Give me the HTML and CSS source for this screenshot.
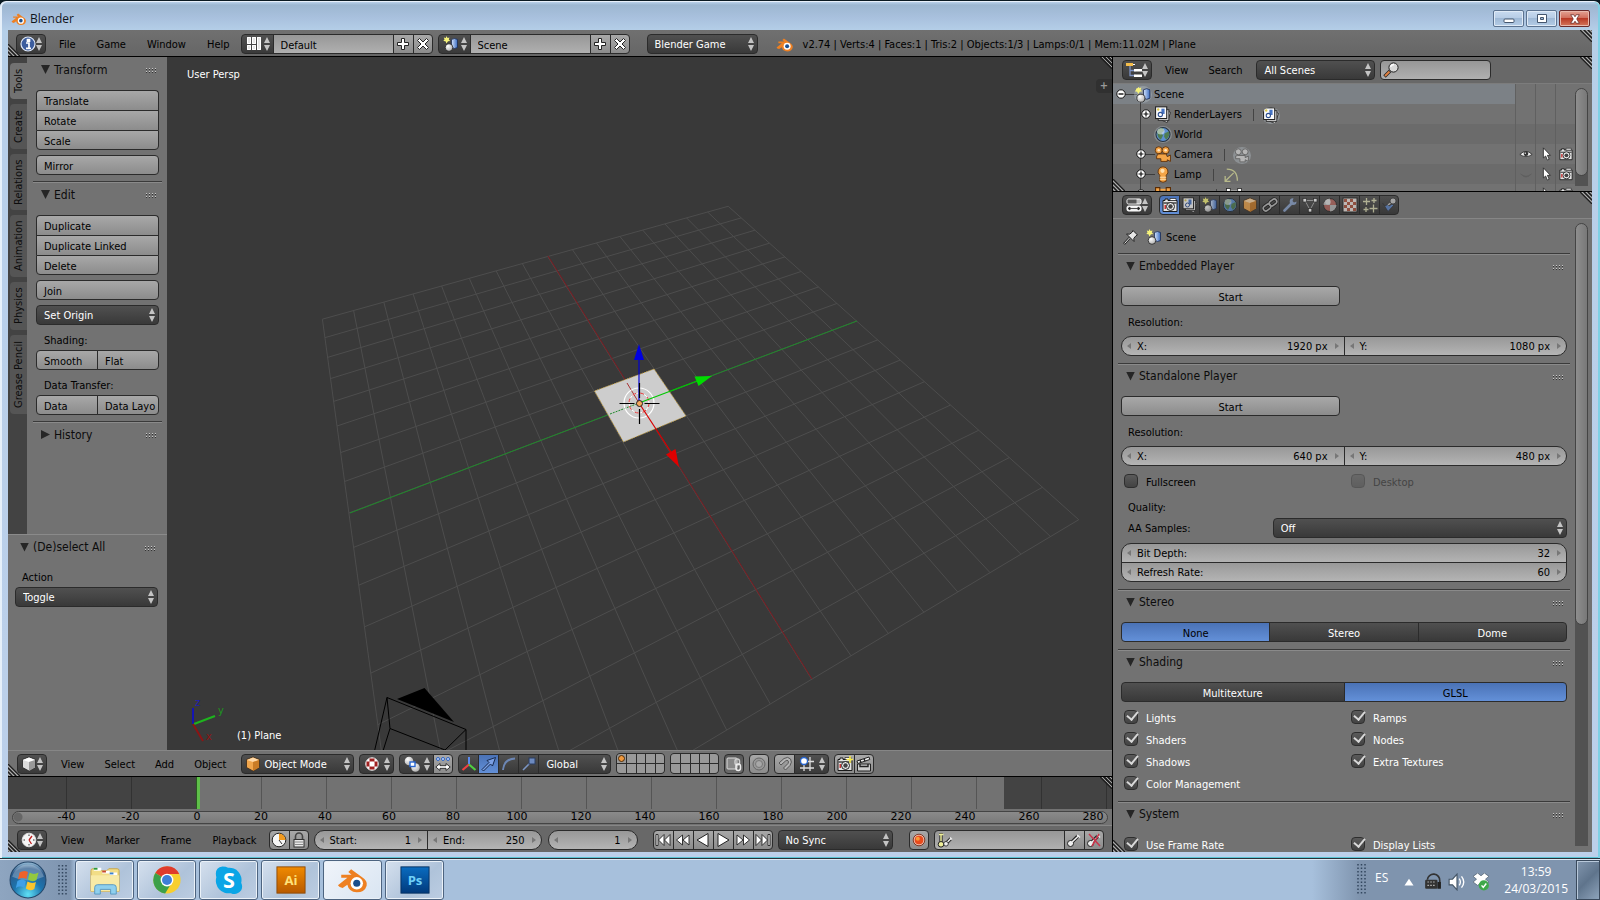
FILE: index.html
```html
<!DOCTYPE html>
<html lang="en">
<head>
<meta charset="utf-8">
<title>Blender</title>
<link rel="stylesheet" href="styles.css">
</head>
<body>
<svg class="defs" aria-hidden="true">
  <defs>
    <linearGradient id="gOrange" x1="0" y1="0" x2="1" y2="1"><stop offset="0" stop-color="#ffd9a0"/><stop offset="1" stop-color="#d9822b"/></linearGradient>
    <linearGradient id="gBlue" x1="0" y1="0" x2="1" y2="0"><stop offset="0" stop-color="#d6e6ff"/><stop offset="1" stop-color="#3b6cc0"/></linearGradient>
    <radialGradient id="gBall" cx=".35" cy=".3" r=".8"><stop offset="0" stop-color="#fff"/><stop offset="1" stop-color="#a8a8a8"/></radialGradient>
    <radialGradient id="gOrb" cx=".5" cy=".9" r=".9"><stop offset="0" stop-color="#5fe0f5"/><stop offset=".45" stop-color="#1d74ad"/><stop offset=".8" stop-color="#2b5a8c"/><stop offset="1" stop-color="#9fc4dc"/></radialGradient>
    <linearGradient id="gAi" x1="0" y1="0" x2="0" y2="1"><stop offset="0" stop-color="#f08a00"/><stop offset="1" stop-color="#b85a00"/></linearGradient>
    <linearGradient id="gPs" x1="0" y1="0" x2="0" y2="1"><stop offset="0" stop-color="#0a6cc0"/><stop offset="1" stop-color="#013a7c"/></linearGradient>
  </defs>
  <symbol id="updown" viewBox="0 0 6 14"><path d="M3 0L6 6H0zM3 14L0 8H6z" fill="#c4c4c4"/></symbol>
  <symbol id="blender" viewBox="0 0 34 28"><path d="M1 19.500L11 11.500H4.500V8.500H15.500L12 5.500L15 2.500L26 10.500Q33 15 31.500 20Q29.500 27 21 27Q12.500 26.500 11 19L6 22.500Q3 22.500 1 19.500Z" fill="#ee8022"/><circle cx="21" cy="17.500" r="6.600" fill="#fff"/><circle cx="21" cy="17.500" r="3.800" fill="#1c4f8c"/></symbol>
  <symbol id="info" viewBox="0 0 16 16"><circle cx="8" cy="8" r="7" fill="#3c5d9e" stroke="#dfe8f8" stroke-width="1.200"/><path d="M6 7h3v5M6 12.300h5M7.500 3.500h2v1.700h-2z" fill="none" stroke="#fff" stroke-width="1.700"/></symbol>
  <symbol id="layout" viewBox="0 0 16 16"><path d="M1 1h4v7H1zM6 1h4v7H6zM1 9h4v5H1zM6 9h4v5H6zM11 1h4v13h-4z" fill="#e6e6e6"/><path d="M1.500 1.500h3v6h-3zM6.500 1.500h3v6h-3zM1.500 9.500h3v4h-3zM6.500 9.500h3v4h-3zM11.500 1.500h3v12h-3z" fill="none" stroke="#fff"/></symbol>
  <symbol id="plus" viewBox="0 0 14 14"><path d="M5.500 1.500h3v4h4v3h-4v4h-3v-4h-4v-3h4z" fill="#fff" stroke="#222"/></symbol>
  <symbol id="cross" viewBox="0 0 14 14"><path d="M3.500 1.500L7 5L10.500 1.500L12.500 3.500L9 7L12.500 10.500L10.500 12.500L7 9L3.500 12.500L1.500 10.500L5 7L1.500 3.500z" fill="#fff" stroke="#222"/></symbol>
  <symbol id="scene" viewBox="0 0 16 16"><path d="M8.500 3.500q3-2 6 0v8q-3 2-6 0z" fill="url(#gBlue)" stroke="#1c2d55" stroke-width=".8"/><circle cx="6" cy="11.500" r="3.800" fill="url(#gBall)" stroke="#222" stroke-width=".8"/><path d="M3.500 0l1 2 2-.5-.7 2 1.400 1.500-2.200.3L3.500 7.500 2.500 5.300.3 5 1.500 3.500.8 1.500l2 .5z" fill="#f6f37a"/></symbol>
  <symbol id="outliner" viewBox="0 0 16 16"><path d="M4 4v9.500h6M4 8.500h6" fill="none" stroke="#7d92c4" stroke-width="1.300"/><rect x="0" y="1" width="7" height="3" fill="#f4bd4b"/><path d="M7 2.500h2" stroke="#fff"/><rect x="8" y="7" width="8" height="2.500" fill="#fff"/><rect x="8" y="12.500" width="8" height="2.500" fill="#fff"/></symbol>
  <symbol id="props" viewBox="0 0 16 16"><rect x="1" y="2" width="14" height="5" rx="1.500" fill="#bbb" stroke="#fff"/><rect x="1.500" y="2.500" width="9" height="4" fill="#555"/><rect x="1" y="9" width="14" height="5" rx="1.500" fill="#eee" stroke="#fff"/><path d="M2 11.500l2-1.500v3zM14 11.500l-2-1.500v3zM4 11.500h8" stroke="#222" fill="#222" stroke-width=".8"/></symbol>
  <symbol id="search" viewBox="0 0 16 16"><path d="M7 9L1.500 14.500" stroke="#222" stroke-width="3.400"/><path d="M6.500 9.500L2 14" stroke="#e08040" stroke-width="2"/><circle cx="10.500" cy="5.500" r="4.600" fill="#d9d9d9" stroke="#222"/><path d="M7.500 5q1-2.500 3.500-2.500" stroke="#fff" fill="none" stroke-width="1.300"/></symbol>
  <symbol id="layers" viewBox="0 0 16 16"><path d="M7 13.500l5 2 3-9.500-2.500-1z" fill="#eee" stroke="#222" stroke-width=".8"/><rect x="3.500" y="3.500" width="10" height="10" fill="#ddd" stroke="#222" stroke-width=".8"/><rect x="1" y=".8" width="10.500" height="11" fill="#fafafa" stroke="#222"/><path d="M6.500 2.500h3v5h-3z" fill="#4674c4"/><circle cx="5.500" cy="8" r="2" fill="#fff" stroke="#2c4f92"/><circle cx="3.500" cy="3.300" r="1.100" fill="#ddc94a"/></symbol>
  <symbol id="world" viewBox="0 0 16 16"><circle cx="8" cy="8" r="6.600" fill="#5c8fd0" stroke="#26323f"/><path d="M3 4q2-2.500 5-2l1 2.500-2.500 2L8 9l-2 4Q1.500 10 3 4zM9.500 7l4-2q1.500 4-2.500 8l-2-3z" fill="#4f7d52"/><ellipse cx="6" cy="5" rx="3.500" ry="3" fill="#fff" opacity=".5"/></symbol>
  <symbol id="movcam" viewBox="0 0 16 16"><g fill="#f3a447" stroke="#5a2c05" stroke-width=".8"><circle cx="4" cy="4" r="3.300"/><circle cx="10.500" cy="4" r="3.300"/><path d="M3.500 7.500h7.500l1 2.500 3-1.500v6l-3-1.500v1.500H6V12H2V9.500z"/></g><circle cx="4" cy="4" r="1.200" fill="#ffe6c4"/><circle cx="10.500" cy="4" r="1.200" fill="#ffe6c4"/></symbol>
  <symbol id="movcam2" viewBox="0 0 16 16"><g fill="#b5b5b5" stroke="#666" stroke-width=".9"><circle cx="4.500" cy="4.500" r="2.800"/><circle cx="11" cy="4.500" r="2.800"/><path d="M4 8h7v2l3-1.500v5L11 12v2H6V11H2V8.500z"/></g></symbol>
  <symbol id="bulb" viewBox="0 0 16 16"><path d="M8 .8a4.500 4.500 0 0 1 3 8v5.500q-3 2-6 0V8.800a4.500 4.500 0 0 1 3-8z" fill="#f3a447" stroke="#5a2c05" stroke-width=".8"/><path d="M5 10.500h6M5 12.500h6" stroke="#ffe0b0"/><circle cx="7.500" cy="4.500" r="2" fill="#ffe0b0"/></symbol>
  <symbol id="arc" viewBox="0 0 16 16"><path d="M4 2q10 0 10 11M10.500 5.500L3 13M2.500 8.500v5h5" fill="none" stroke="#b7b98a" stroke-width="1.200"/></symbol>
  <symbol id="eye" viewBox="0 0 16 16"><path d="M1 8.500Q8 1.500 15 8.500Q8 13.500 1 8.500z" fill="#eee" stroke="#222" stroke-width=".9"/><circle cx="8" cy="7.800" r="2.600" fill="#333"/><circle cx="7.200" cy="7" r=".8" fill="#fff"/></symbol>
  <symbol id="eyeoff" viewBox="0 0 16 16"><path d="M2 8q6 5 12 0q-6 7-12 0z" fill="#555" stroke="#606060"/></symbol>
  <symbol id="cursor" viewBox="0 0 16 16"><path d="M5 1v11.500l2.600-2.200 2 4.700 2-1-2-4.500h3.400z" fill="#fff" stroke="#222" stroke-width=".9"/></symbol>
  <symbol id="camera" viewBox="0 0 16 16"><path d="M1 3.500h2V2h3v1.500h9v11H1z" fill="#e4e4e4" stroke="#1a1a1a"/><path d="M8 1.500h6v2H8z" fill="#fff" stroke="#222" stroke-width=".7"/><path d="M1.500 6h13" stroke="#444" stroke-width="1.300"/><circle cx="8.500" cy="9.500" r="4" fill="#eee" stroke="#222"/><circle cx="8.500" cy="9.500" r="2.200" fill="#444"/><path d="M2.500 8h1.500v4H2.500z" fill="#c33"/></symbol>
  <symbol id="cube" viewBox="0 0 16 16"><path d="M8 1l6.500 2.500v8L8 15l-6.500-3.500v-8z" fill="#f0a54c" stroke="#3a2a1a" stroke-width=".8"/><path d="M2 4l6 2 6-2L8 1.500z" fill="#ffd9a8"/><path d="M8 6v9l6-3.500V4z" fill="#c97b26"/></symbol>
  <symbol id="cubew" viewBox="0 0 16 16"><path d="M8 1l6.500 2.500v8L8 15l-6.500-3.500v-8z" fill="#ddd" stroke="#222" stroke-width=".8"/><path d="M2 4l6 2 6-2L8 1.500z" fill="#fff"/><path d="M8 6v9l6-3.500V4z" fill="#999"/></symbol>
  <symbol id="link" viewBox="0 0 16 16"><g fill="none" stroke="#1c1c1c" stroke-width="3.400"><rect x="1" y="8" width="8" height="5" rx="2.500" transform="rotate(-38 5 10.500)"/><rect x="7" y="3" width="8" height="5" rx="2.500" transform="rotate(-38 11 5.500)"/></g><g fill="none" stroke="#bbb" stroke-width="1.600"><rect x="1" y="8" width="8" height="5" rx="2.500" transform="rotate(-38 5 10.500)"/><rect x="7" y="3" width="8" height="5" rx="2.500" transform="rotate(-38 11 5.500)"/></g></symbol>
  <symbol id="wrench" viewBox="0 0 16 16"><path d="M2.500 13.500L9.500 6.500" stroke="#8ea6cf" stroke-width="2.600" stroke-linecap="round"/><path d="M14.500 4.500a3.400 3.400 0 1 1-3-3.200L10.500 4l1.500 1.500z" fill="#8ea6cf"/></symbol>
  <symbol id="mesh" viewBox="0 0 16 16"><path d="M3 3.500h10L8 13z" fill="none" stroke="#aaa"/><g fill="#fff" stroke="#222" stroke-width=".7"><rect x="1" y="1.500" width="3.500" height="3.500"/><rect x="11.500" y="1.500" width="3.500" height="3.500"/><rect x="6.300" y="11.500" width="3.500" height="3.500"/></g></symbol>
  <symbol id="material" viewBox="0 0 16 16"><circle cx="8" cy="8" r="6.500" fill="#b96a62" stroke="#2a2a2a"/><path d="M8 1.500a6.500 6.500 0 0 0-6.500 6.500H8zM8 8h6.500A6.500 6.500 0 0 1 8 14.500z" fill="#bbb"/><circle cx="6" cy="5" r="2.800" fill="#fff" opacity=".6"/></symbol>
  <symbol id="texture" viewBox="0 0 16 16"><rect x="1" y="1" width="14" height="14" fill="#f0e8e4" stroke="#222"/><path d="M2 2h3v3H2zM8 2h3v3H8zM5 5h3v3H5zM11 5h3v3h-3zM2 8h3v3H2zM8 8h3v3H8zM5 11h3v3H5zM11 11h3v3h-3z" fill="#b0553f"/></symbol>
  <symbol id="particles" viewBox="0 0 16 16"><path d="M4.500 1v7M1 4.500h7M12 1v5M9.500 3.500h5M4 10v5M1.500 12.500h5M11.500 7.500v8M7.500 11.500h8" stroke="#dcdcb4" stroke-width="1.300"/></symbol>
  <symbol id="physics" viewBox="0 0 16 16"><path d="M1.500 6L4 9l2.500-1.500L8 9l3-2 2 1-6 6.500z" fill="#5f86c8" stroke="#333" stroke-width=".8"/><path d="M7 8l4-3" stroke="#ccc" stroke-width="1.500"/><circle cx="12" cy="4" r="3" fill="#ccc" stroke="#333" stroke-width=".8"/></symbol>
  <symbol id="pin" viewBox="0 0 16 16"><path d="M1 15l5.500-6" stroke="#222" stroke-width="2.400"/><path d="M1.500 14.500l5-5.500" stroke="#eee"/><path d="M10 1.500L14.500 6l-1.500.7-2.200 2.600.2 3.200-7.500-7.500 3.200.2L9.300 3z" fill="#e6e6e6" stroke="#222"/></symbol>
  <symbol id="shade" viewBox="0 0 16 16"><circle cx="8" cy="8" r="6.300" fill="#fff" stroke="#ddd"/><path d="M5.500 2.500h5v3h-5zM5.500 10.500h5v3h-5zM2.500 5.500h3v5h-3zM10.500 5.500h3v5h-3z" fill="#a02020"/><circle cx="8" cy="8" r="2.300" fill="#fff"/></symbol>
  <symbol id="pivot" viewBox="0 0 16 16"><circle cx="5" cy="5" r="4.300" fill="url(#gBall)"/><circle cx="11.500" cy="11.500" r="4.300" fill="url(#gBall)"/><rect x="6" y="6" width="5" height="4.500" fill="#fff" stroke="#2765d0" stroke-width="1.400"/></symbol>
  <symbol id="manip" viewBox="0 0 16 16"><g fill="#cfe0ff" stroke="#2b62c4"><circle cx="3" cy="3" r="1.500"/><circle cx="8" cy="3" r="1.500"/><circle cx="13" cy="3" r="1.500"/></g><path d="M.8 11L5 7.500v2.200h6V7.500l4.200 3.500L11 14.500v-2.200H5v2.200z" fill="#fff" stroke="#222" stroke-width=".9"/></symbol>
  <symbol id="axes" viewBox="0 0 16 16"><path d="M8 8.500V1" stroke="#5b8bf0" stroke-width="2"/><path d="M8 8.500L1.500 14" stroke="#f04040" stroke-width="2.200"/><path d="M8 8.500l6.500 5.500" stroke="#50d040" stroke-width="2.200"/></symbol>
  <symbol id="arrow" viewBox="0 0 16 16"><path d="M1 13.500L8 6.500 6 4.500l8.500-3-3 8.500-2-2L2.500 15z" fill="#7ba0e4" stroke="#16294e"/></symbol>
  <symbol id="rot" viewBox="0 0 16 16"><path d="M2 14Q3 3 14 2.500" fill="none" stroke="#6c86b4" stroke-width="2"/></symbol>
  <symbol id="scale" viewBox="0 0 16 16"><path d="M2 14l7-7" stroke="#7c96c4" stroke-width="1.600"/><rect x="8" y="2" width="6" height="6" fill="#6d8abf" stroke="#2b3d60"/></symbol>
  <symbol id="lock3d" viewBox="0 0 16 16"><rect x="1" y="2" width="10" height="11" rx="1" fill="#888" stroke="#ddd"/><rect x="9" y="3" width="4.500" height="6" rx="2.200" fill="none" stroke="#ccc" stroke-width="1.500"/><rect x="10" y="8" width="4.500" height="6.500" rx="2.200" fill="none" stroke="#eee" stroke-width="1.500"/></symbol>
  <symbol id="prop" viewBox="0 0 16 16"><circle cx="8" cy="8" r="6" fill="#999" stroke="#666"/><circle cx="8" cy="8" r="3.500" fill="#a8a8a8" stroke="#777"/></symbol>
  <symbol id="magnet" viewBox="0 0 16 16"><path d="M2 7L7 2.500Q11 0 13.500 3Q15.500 6 13 9.500L8.500 14l-2-2L11 7.500Q12 5.500 11 4.700Q10 4 8.500 5L4 9z" fill="#b5b5b5" stroke="#555"/></symbol>
  <symbol id="snap" viewBox="0 0 16 16"><path d="M5 3v12M11 1v14M1 12h14M8 5.500h7" stroke="#ddd" stroke-width="1.300"/><circle cx="5" cy="5" r="3.500" fill="#fff" stroke="#2765d0" stroke-width="1.300"/></symbol>
  <symbol id="clap" viewBox="0 0 16 16"><path d="M1.500 8h13v7h-13z" fill="#ccc" stroke="#222"/><path d="M1 5l12-4 .8 2.500-12 4z" fill="#eee" stroke="#222"/><path d="M4 4l1 2.500M8 2.700l1 2.500M4 8v2.500h8V8" stroke="#222" fill="none" stroke-width="1.400"/></symbol>
  <symbol id="clock" viewBox="0 0 16 16"><circle cx="8" cy="8" r="6.800" fill="#f5f5f5" stroke="#ddd"/><path d="M8 8l3-4M8 8l2.500 4" stroke="#c02020" stroke-width="1.300"/><path d="M8 2.500v1.500M8 12v1.500M2.500 8H4M12 8h1.500" stroke="#333"/></symbol>
  <symbol id="timer" viewBox="0 0 16 16"><circle cx="8" cy="8" r="6.800" fill="#f5f5f5" stroke="#222"/><path d="M8 8V1.500A6.500 6.500 0 0 1 14.500 8z" fill="#f09a20"/><path d="M8 8l3 4" stroke="#333"/></symbol>
  <symbol id="padlock" viewBox="0 0 16 16"><path d="M4.500 8V4.500a3.500 3.500 0 0 1 7 0V8" fill="none" stroke="#444" stroke-width="1.600"/><rect x="3" y="7.500" width="10" height="7.500" fill="#e8e8e8" stroke="#333"/><path d="M3.500 10h9M3.500 12.500h9" stroke="#888"/></symbol>
  <symbol id="start" viewBox="0 0 16 16"><path d="M1 2.500h2v11H1zM9 2.500v11L3.500 8zM15 2.500v11L9.500 8z" fill="#fff" stroke="#222" stroke-width=".9"/></symbol>
  <symbol id="rew" viewBox="0 0 16 16"><path d="M7.500 3v10L1.500 8zM14 3v10L8 8z" fill="#fff" stroke="#222" stroke-width=".9"/></symbol>
  <symbol id="play" viewBox="0 0 16 16"><path d="M3 1.500v13L14 8z" fill="#fff" stroke="#222"/></symbol>
  <symbol id="rec" viewBox="0 0 16 16"><circle cx="8" cy="8" r="5" fill="#e84a1c" stroke="#fbd0c0"/><circle cx="8" cy="8" r="5.800" fill="none" stroke="#7a2008" stroke-width=".8"/><circle cx="6.800" cy="6.800" r="2" fill="#f79a3a"/></symbol>
  <symbol id="key" viewBox="0 0 16 16"><path d="M6 10L12 4" stroke="#222" stroke-width="3.600"/><circle cx="4.500" cy="11.500" r="3" fill="#eee" stroke="#222"/><path d="M5.500 10.500L13 3.500M11 3l3 2.500" stroke="#eee" stroke-width="1.600"/></symbol>
  <symbol id="keyset" viewBox="0 0 16 16"><path d="M4 1v10" stroke="#222" stroke-width="3.200"/><path d="M4 1.500V11M4 2.500h2.500M2 2.500h2" stroke="#eeee9a" stroke-width="1.500"/><circle cx="4" cy="12.300" r="2.800" fill="#eeee9a" stroke="#222"/><path d="M9 11.500l5-5" stroke="#222" stroke-width="3.200"/><path d="M9 11.500l5.500-5.500M13 5.500l2 2" stroke="#eee" stroke-width="1.500"/><circle cx="9" cy="11.800" r="2.300" fill="#eee" stroke="#222" stroke-width=".8"/></symbol>
  <symbol id="exp" viewBox="0 0 10 10"><circle cx="5" cy="5" r="4.200" fill="#fff" stroke="#111"/><path d="M2.500 5h5M5 2.500v5" stroke="#111" stroke-width="1.200"/></symbol>
  <symbol id="col" viewBox="0 0 10 10"><circle cx="5" cy="5" r="4.200" fill="#fff" stroke="#111"/><path d="M2.500 5h5" stroke="#111" stroke-width="1.400"/></symbol>
  <symbol id="grip" viewBox="0 0 11 5"><path d="M0 .5h11M0 3.500h11" stroke="#c8c8c8" stroke-width="1" stroke-dasharray="1 2"/><path d="M0 1.500h11M0 4.500h11" stroke="#333" stroke-width="1" stroke-dasharray="1 2"/></symbol>
  <symbol id="hatch" viewBox="0 0 12 12"><path d="M0 0l12 12M4 0l8 8M8 0l4 4" stroke="#1c1c1c" stroke-width="1.200"/><path d="M2 0l10 10M6 0l6 6M10 0l2 2" stroke="#bbb" stroke-width=".8"/></symbol>
  <symbol id="hatchbl" viewBox="0 0 12 12"><path d="M0 0l12 12M0 4l8 8M0 8l4 4" stroke="#1c1c1c" stroke-width="1.200"/><path d="M0 2l10 10M0 6l6 6M0 10l2 2" stroke="#bbb" stroke-width=".8"/></symbol>
</svg>

<div class="window">
  <header class="titlebar">
    <svg class="logo"><use href="#blender"/></svg>
    <h1>Blender</h1>
    <div class="winbtns">
      <button aria-label="Minimize"><svg viewBox="0 0 12 12"><rect x="1" y="6" width="10" height="3.500" rx="1" fill="#fff" stroke="#44566e"/></svg></button>
      <button aria-label="Maximize"><svg viewBox="0 0 12 12"><path d="M1.500 1.500h9v8h-9zM4.500 4.500h3v2h-3z" fill="#fff" fill-rule="evenodd" stroke="#44566e"/></svg></button>
      <button class="close" aria-label="Close"><svg viewBox="0 0 14 14"><path d="M2 2h3.500L7 4.500 8.500 2H12L9 7l3 5H8.500L7 9.500 5.500 12H2l3-5z" fill="#fff" stroke="#5a2020" stroke-width=".8"/></svg></button>
    </div>
  </header>

  <div class="app">
    <div class="bar topbar">
      <svg class="hatch bl"><use href="#hatchbl"/></svg><svg class="hatch tr"><use href="#hatch"/></svg>
      <button class="w dark etype" aria-label="Editor type"><svg class="i"><use href="#info"/></svg><svg class="ud"><use href="#updown"/></svg></button>
      <nav class="menus"><button>File</button><button>Game</button><button>Window</button><button>Help</button></nav>
      <div class="group idsel">
        <button class="w dark pick" aria-label="Screen"><svg class="i"><use href="#layout"/></svg><svg class="ud"><use href="#updown"/></svg></button>
        <input class="w text" value="Default" aria-label="Screen name">
        <button class="w light sq" aria-label="Add screen"><svg class="s"><use href="#plus"/></svg></button>
        <button class="w light sq" aria-label="Delete screen"><svg class="s"><use href="#cross"/></svg></button>
      </div>
      <div class="group idsel">
        <button class="w dark pick" aria-label="Scene"><svg class="i"><use href="#scene"/></svg><svg class="ud"><use href="#updown"/></svg></button>
        <input class="w text" value="Scene" aria-label="Scene name">
        <button class="w light sq" aria-label="Add scene"><svg class="s"><use href="#plus"/></svg></button>
        <button class="w light sq" aria-label="Delete scene"><svg class="s"><use href="#cross"/></svg></button>
      </div>
      <div class="menu engine"><select class="w dark" aria-label="Engine"><option>Blender Game</option></select><svg class="ud"><use href="#updown"/></svg></div>
      <svg class="logo2"><use href="#blender"/></svg>
      <span class="stats">v2.74 | Verts:4 | Faces:1 | Tris:2 | Objects:1/3 | Lamps:0/1 | Mem:11.02M | Plane</span>
    </div>

    <div class="body">
      <div class="left">
        <section class="view3d">
          <div class="main3d">
            <aside class="shelf">
              <div class="tools">
                <div class="tabs">
                  <button class="tab t1 on">Tools</button><button class="tab t2">Create</button><button class="tab t3">Relations</button><button class="tab t4">Animation</button><button class="tab t5">Physics</button><button class="tab t6">Grease Pencil</button>
                </div>
                <div class="toolpanels">
                  <section class="panel first">
                    <h2><i class="tri"></i>Transform<svg class="grip"><use href="#grip"/></svg></h2>
                    <div class="col"><button class="w light">Translate</button><button class="w light">Rotate</button><button class="w light">Scale</button></div>
                    <div class="col"><button class="w light">Mirror</button></div>
                  </section>
                  <section class="panel">
                    <h2><i class="tri"></i>Edit<svg class="grip"><use href="#grip"/></svg></h2>
                    <div class="col"><button class="w light">Duplicate</button><button class="w light">Duplicate Linked</button><button class="w light">Delete</button></div>
                    <div class="col"><button class="w light">Join</button></div>
                    <div class="menu"><select class="w dark" aria-label="Set Origin"><option>Set Origin</option></select><svg class="ud"><use href="#updown"/></svg></div>
                    <p class="lab">Shading:</p>
                    <div class="row"><button class="w light">Smooth</button><button class="w light">Flat</button></div>
                    <p class="lab">Data Transfer:</p>
                    <div class="row"><button class="w light">Data</button><button class="w light">Data Layo</button></div>
                  </section>
                  <section class="panel"><h2><i class="tri shut"></i>History<svg class="grip"><use href="#grip"/></svg></h2></section>
                </div>
              </div>
              <section class="panel redo">
                <h2><i class="tri"></i>(De)select All<svg class="grip"><use href="#grip"/></svg></h2>
                <label for="action">Action</label>
                <div class="menu"><select id="action" class="w dark"><option>Toggle</option></select><svg class="ud"><use href="#updown"/></svg></div>
              </section>
            </aside>
            <div class="canvas">
              <svg class="scene3d" viewBox="167 57 945 693" preserveAspectRatio="xMidYMid slice">
                <g id="grid"></g>
                <path d="M350 513L639 403L857 321" stroke="#1f8a2a" fill="none"/>
                <path d="M548 256L812 679" stroke="#7e1a20" fill="none"/>
                <path d="M654 369L686 416L623.500 442L594.500 391Z" fill="#cdcdcd" stroke="#c9a23c" stroke-dasharray="1 1"/>
                <path d="M627 383L639 403" stroke="#a33"/><path d="M610 414L639 403" stroke="#1f8a2a" stroke-dasharray="2 1"/>
                <circle cx="639" cy="403" r="15" fill="none" stroke="#fff" stroke-width="1.200"/>
                <circle cx="639" cy="403" r="10" fill="none" stroke="#fff"/><circle cx="639" cy="403" r="10" fill="none" stroke="#e03030" stroke-dasharray="4 4"/>
                <path d="M639 403V360" stroke="#0000d0" stroke-width="1.200"/><path d="M639 344L644 360H634z" fill="#0000e0"/>
                <path d="M639 403L697 381" stroke="#00c800" stroke-width="1.200"/><path d="M712 376L694.500 376.500L698.500 386z" fill="#00dc00"/>
                <path d="M639 403L671 452" stroke="#d80000" stroke-width="1.200"/><path d="M679 467L666 454.500L675.500 449z" fill="#e00000"/>
                <path d="M619.500 403.500h15M644.500 403.500h15M639.500 383v15M639.500 409v15" stroke="#000" stroke-width="1.200"/>
                <circle cx="639.500" cy="403.500" r="3" fill="#f5a85c" stroke="#222"/>
                <path d="M397 699L424.500 688L454 722z" fill="#000"/>
                <path d="M374.500 751L387 697.500L466 729.500V751M387 697.500L390 728.500L445 750L466 729.500M390 728.500L383 751" fill="none" stroke="#000"/>
                <g fill="none" stroke-width="2"><path d="M193 724V708" stroke="#1414b4"/><path d="M194 724L215 716" stroke="#1eb41e"/><path d="M193 724L203 741" stroke="#8c1414"/></g>
                <text class="ax" x="195" y="706" fill="#1e1eb4">z</text><text class="ax" x="218" y="714" fill="#1e961e">y</text><text class="ax" x="206" y="740" fill="#8c1414">x</text>
              </svg>
              <span class="persp">User Persp</span><span class="obname">(1) Plane</span>
              <svg class="hatch tr"><use href="#hatch"/></svg>
              <button class="expand" aria-label="Show properties">+</button>
            </div>
          </div>
          <div class="bar vbar">
            <svg class="hatch bl"><use href="#hatchbl"/></svg>
            <button class="w dark etype" aria-label="Editor type"><svg class="i"><use href="#cubew"/></svg><svg class="ud"><use href="#updown"/></svg></button>
            <nav class="menus"><button>View</button><button>Select</button><button>Add</button><button>Object</button></nav>
            <div class="menu mode"><svg class="i"><use href="#cube"/></svg><select class="w dark" aria-label="Mode"><option>Object Mode</option></select><svg class="ud"><use href="#updown"/></svg></div>
            <button class="w dark pick" aria-label="Viewport shading"><svg class="i"><use href="#shade"/></svg><svg class="ud"><use href="#updown"/></svg></button>
            <div class="group"><button class="w dark pick" aria-label="Pivot"><svg class="i"><use href="#pivot"/></svg><svg class="ud"><use href="#updown"/></svg></button><button class="w light sq" aria-label="Manipulate centers"><svg class="i"><use href="#manip"/></svg></button></div>
            <div class="group"><button class="w dark sq" aria-label="Manipulator"><svg class="i"><use href="#axes"/></svg></button><button class="w blue sq" aria-label="Translate"><svg class="i"><use href="#arrow"/></svg></button><button class="w dark sq" aria-label="Rotate"><svg class="i"><use href="#rot"/></svg></button><button class="w dark sq" aria-label="Scale"><svg class="i"><use href="#scale"/></svg></button><div class="menu orient"><select class="w dark" aria-label="Orientation"><option>Global</option></select><svg class="ud"><use href="#updown"/></svg></div></div>
            <div class="layergrid"><b class="act"></b><b></b><b></b><b></b><b></b><b></b><b></b><b></b><b></b><b></b></div>
            <div class="layergrid"><b></b><b></b><b></b><b></b><b></b><b></b><b></b><b></b><b></b><b></b></div>
            <button class="w dim sq" aria-label="Lock camera"><svg class="i"><use href="#lock3d"/></svg></button>
            <button class="w light sq" aria-label="Proportional editing"><svg class="i"><use href="#prop"/></svg></button>
            <div class="group"><button class="w light sq" aria-label="Snap"><svg class="i"><use href="#magnet"/></svg></button><button class="w dark pick" aria-label="Snap element"><svg class="i"><use href="#snap"/></svg><svg class="ud"><use href="#updown"/></svg></button></div>
            <div class="group"><button class="w light sq" aria-label="Render image"><svg class="i" viewBox="0 0 16 16"><use href="#camera"/><path d="M13 0v7M9.500 3.500h7" stroke="#f6e84a" stroke-width="1.600"/></svg></button><button class="w light sq" aria-label="Render animation"><svg class="i"><use href="#clap"/></svg></button></div>
          </div>
        </section>

        <section class="timeline">
          <svg class="hatch tr"><use href="#hatch"/></svg>
          <div class="track"><div class="lines"><i></i><i></i><i></i><i></i><i></i><i></i><i></i><i></i><i></i><i></i><i></i><i></i><i></i><i></i><i></i><i></i><i></i></div><div class="playhead"></div></div>
          <div class="scale"><div class="scalebar"></div><div class="nums"><span class="neg">-40</span><span class="neg">-20</span><span>0</span><span>20</span><span>40</span><span>60</span><span>80</span><span>100</span><span>120</span><span>140</span><span>160</span><span>180</span><span>200</span><span>220</span><span>240</span><span>260</span><span>280</span></div></div>
          <div class="bar tbar">
            <svg class="hatch bl"><use href="#hatchbl"/></svg>
            <button class="w dark etype" aria-label="Editor type"><svg class="i"><use href="#clock"/></svg><svg class="ud"><use href="#updown"/></svg></button>
            <nav class="menus"><button>View</button><button>Marker</button><button>Frame</button><button>Playback</button></nav>
            <div class="group rg"><button class="w light sq" aria-label="Preview range"><svg class="i"><use href="#timer"/></svg></button><button class="w light sq" aria-label="Lock time"><svg class="i"><use href="#padlock"/></svg></button></div>
            <div class="nums2 range"><div class="num"><i class="l"></i><label for="st">Start:</label><input id="st" value="1"><i class="r"></i></div><div class="num"><i class="l"></i><label for="en">End:</label><input id="en" value="250"><i class="r"></i></div></div>
            <div class="nums2 cur"><div class="num"><i class="l"></i><input value="1" aria-label="Current frame"><i class="r"></i></div></div>
            <div class="group player"><button class="w light sq" aria-label="First"><svg class="i"><use href="#start"/></svg></button><button class="w light sq" aria-label="Previous key"><svg class="i"><use href="#rew"/></svg></button><button class="w light sq" aria-label="Play reverse"><svg class="i flip"><use href="#play"/></svg></button><button class="w light sq" aria-label="Play"><svg class="i"><use href="#play"/></svg></button><button class="w light sq" aria-label="Next key"><svg class="i flip"><use href="#rew"/></svg></button><button class="w light sq" aria-label="Last"><svg class="i flip"><use href="#start"/></svg></button></div>
            <div class="menu sync"><select class="w dark" aria-label="Sync"><option>No Sync</option></select><svg class="ud"><use href="#updown"/></svg></div>
            <button class="w light sq rec" aria-label="Record"><svg class="i"><use href="#rec"/></svg></button>
            <div class="group keying"><div class="iconfield"><svg class="i"><use href="#keyset"/></svg><input class="w text" aria-label="Keying set"></div><button class="w light sq" aria-label="Insert key"><svg class="i"><use href="#key"/></svg></button><button class="w light sq" aria-label="Delete key"><svg class="i"><use href="#key"/><path d="M3 2l11 12M13 2L6 14" stroke="#c8344a" stroke-width="1.500"/></svg></button></div>
          </div>
        </section>
      </div>

      <div class="right">
        <section class="outliner">
          <svg class="hatch tr"><use href="#hatch"/></svg><svg class="hatch bl"><use href="#hatchbl"/></svg>
          <div class="bar">
            <button class="w dark etype" aria-label="Editor type"><svg class="i"><use href="#outliner"/></svg><svg class="ud"><use href="#updown"/></svg></button>
            <nav class="menus"><button>View</button><button>Search</button></nav>
            <div class="menu disp"><select class="w dark" aria-label="Display"><option>All Scenes</option></select><svg class="ud"><use href="#updown"/></svg></div>
            <div class="iconfield find"><svg class="i"><use href="#search"/></svg><input class="w text" aria-label="Filter"></div>
          </div>
          <div class="treewrap">
            <ul class="tree">
              <li class="sel"><svg class="ex root"><use href="#col"/></svg><svg class="ti halo"><use href="#scene"/></svg><span class="nm">Scene</span><span class="c"></span><span class="c"></span><span class="c"></span></li>
              <li><svg class="ex deep"><use href="#exp"/></svg><svg class="ti"><use href="#layers"/></svg><span class="nm">RenderLayers<i></i><svg class="ti halo"><use href="#layers"/></svg></span><span class="c"></span><span class="c"></span><span class="c"></span></li>
              <li><svg class="ex deep"></svg><svg class="ti halo"><use href="#world"/></svg><span class="nm">World</span><span class="c"></span><span class="c"></span><span class="c"></span></li>
              <li class="kid"><svg class="ex"><use href="#exp"/></svg><svg class="ti"><use href="#movcam"/></svg><span class="nm">Camera<i></i><svg class="ti halo"><use href="#movcam2"/></svg></span><span class="c"><svg><use href="#eye"/></svg></span><span class="c"><svg><use href="#cursor"/></svg></span><span class="c"><svg><use href="#camera"/></svg></span></li>
              <li class="kid"><svg class="ex"><use href="#exp"/></svg><svg class="ti"><use href="#bulb"/></svg><span class="nm">Lamp<i></i><svg class="ti"><use href="#arc"/></svg></span><span class="c"><svg><use href="#eyeoff"/></svg></span><span class="c"><svg><use href="#cursor"/></svg></span><span class="c"><svg><use href="#camera"/></svg></span></li>
              <li class="kid"><svg class="ex"><use href="#exp"/></svg><svg class="ti" viewBox="0 0 16 16"><path d="M3 3.500h10L8 13z" fill="none" stroke="#f3a447" stroke-width="2"/><path d="M1 1.500h4v4H1zM11 1.500h4v4h-4z" fill="#f3a447" stroke="#5a2c05"/></svg><span class="nm below"><i></i><svg class="ti"><use href="#mesh"/></svg></span><span class="c"><svg><use href="#eye"/></svg></span><span class="c"><svg><use href="#cursor"/></svg></span><span class="c"><svg><use href="#camera"/></svg></span></li>
            </ul>
            <div class="sb"><div class="thumb a"></div></div>
          </div>
        </section>

        <section class="properties">
          <svg class="hatch tr"><use href="#hatch"/></svg><svg class="hatch bl"><use href="#hatchbl"/></svg>
          <div class="bar pbar">
            <button class="w dark etype" aria-label="Editor type"><svg class="i"><use href="#props"/></svg><svg class="ud"><use href="#updown"/></svg></button>
            <div class="group ctx"><button class="w blue sq" aria-label="Render"><svg class="i"><use href="#camera"/></svg></button><button class="w dark sq" aria-label="Render layers"><svg class="i"><use href="#layers"/></svg></button><button class="w dark sq" aria-label="Scene"><svg class="i"><use href="#scene"/></svg></button><button class="w dark sq" aria-label="World"><svg class="i"><use href="#world"/></svg></button><button class="w dark sq" aria-label="Object"><svg class="i"><use href="#cube"/></svg></button><button class="w dark sq" aria-label="Constraints"><svg class="i"><use href="#link"/></svg></button><button class="w dark sq" aria-label="Modifiers"><svg class="i"><use href="#wrench"/></svg></button><button class="w dark sq" aria-label="Data"><svg class="i"><use href="#mesh"/></svg></button><button class="w dark sq" aria-label="Material"><svg class="i"><use href="#material"/></svg></button><button class="w dark sq" aria-label="Texture"><svg class="i"><use href="#texture"/></svg></button><button class="w dark sq" aria-label="Particles"><svg class="i"><use href="#particles"/></svg></button><button class="w dark sq" aria-label="Physics"><svg class="i"><use href="#physics"/></svg></button></div>
          </div>
          <div class="propwrap">
            <div class="panels">
              <div class="crumb"><svg class="i"><use href="#pin"/></svg><svg class="i"><use href="#scene"/></svg><span>Scene</span></div>
              <section class="panel">
                <h2><i class="tri"></i>Embedded Player<svg class="grip"><use href="#grip"/></svg></h2>
                <button class="w light half">Start</button>
                <p class="lab">Resolution:</p>
                <div class="nums2"><div class="num"><i class="l"></i><label for="ex">X:</label><input id="ex" value="1920 px"><i class="r"></i></div><div class="num"><i class="l"></i><label for="ey">Y:</label><input id="ey" value="1080 px"><i class="r"></i></div></div>
              </section>
              <section class="panel">
                <h2><i class="tri"></i>Standalone Player<svg class="grip"><use href="#grip"/></svg></h2>
                <button class="w light half">Start</button>
                <p class="lab">Resolution:</p>
                <div class="nums2"><div class="num"><i class="l"></i><label for="sx">X:</label><input id="sx" value="640 px"><i class="r"></i></div><div class="num"><i class="l"></i><label for="sy">Y:</label><input id="sy" value="480 px"><i class="r"></i></div></div>
                <div class="checks plain"><label><input type="checkbox">Fullscreen</label><label class="off"><input type="checkbox" disabled>Desktop</label></div>
                <p class="lab q">Quality:</p>
                <div class="aa"><label for="aa">AA Samples:</label><div class="menu"><select id="aa" class="w dark"><option>Off</option></select><svg class="ud"><use href="#updown"/></svg></div></div>
                <div class="nums2 stack"><div class="num"><i class="l"></i><label for="bd">Bit Depth:</label><input id="bd" value="32"><i class="r"></i></div><div class="num"><i class="l"></i><label for="rr">Refresh Rate:</label><input id="rr" value="60"><i class="r"></i></div></div>
              </section>
              <section class="panel">
                <h2><i class="tri"></i>Stereo<svg class="grip"><use href="#grip"/></svg></h2>
                <div class="row mid"><button class="w blue">None</button><button class="w dark">Stereo</button><button class="w dark">Dome</button></div>
              </section>
              <section class="panel">
                <h2><i class="tri"></i>Shading<svg class="grip"><use href="#grip"/></svg></h2>
                <div class="row mid"><button class="w dark">Multitexture</button><button class="w blue">GLSL</button></div>
                <div class="checks"><label><input type="checkbox" checked>Lights</label><label><input type="checkbox" checked>Ramps</label><label><input type="checkbox" checked>Shaders</label><label><input type="checkbox" checked>Nodes</label><label><input type="checkbox" checked>Shadows</label><label><input type="checkbox" checked>Extra Textures</label><label><input type="checkbox" checked>Color Management</label></div>
              </section>
              <section class="panel">
                <h2><i class="tri"></i>System<svg class="grip"><use href="#grip"/></svg></h2>
                <div class="checks sys"><label><input type="checkbox" checked>Use Frame Rate</label><label><input type="checkbox" checked>Display Lists</label></div>
              </section>
            </div>
            <div class="sb"><div class="thumb b"></div></div>
          </div>
        </section>
      </div>
    </div>
  </div>
</div>

<footer class="taskbar">
  <button class="orb" aria-label="Start"><svg viewBox="0 0 36 36"><circle cx="18" cy="18" r="17" fill="url(#gOrb)" stroke="#24476a"/><path d="M3 15a15.500 15.500 0 0 1 30 0Q18 22 3 15z" fill="#fff" opacity=".25"/><path d="M10 11q4-3 8-.5L16.500 17q-4-2-8 .5z" fill="#f0622a"/><path d="M19.500 11q4 2.500 8.500 0L26 18q-4 2.500-8-.500z" fill="#93c83e"/><path d="M8 19q4-2.500 8 0l-1.500 6.500q-4-2.500-8 0z" fill="#3fa0e8"/><path d="M17.500 19.500q4 2.500 8 .5L24 26.500q-4 2.500-8-.5z" fill="#fbc52c"/></svg></button>
  <svg class="dots" viewBox="0 0 9 30"><path d="M1 0v30M4.500 0v30M8 0v30" stroke="#33475f" stroke-width="1.500" stroke-dasharray="1.500 2"/></svg>
  <div class="tasks">
    <button aria-label="Explorer"><svg viewBox="0 0 34 32"><path d="M2 6q0-2 2-2h6l2 2h7l2-2h9q2 0 2 2v22H2z" fill="#f2dd86" stroke="#c7a445"/><path d="M5 3h8v3H5zM14 6h8v3h-8zM22 8h8v3h-8z" fill="#fff"/><path d="M5 3h4v2H5z" fill="#2c9a3c"/><path d="M14 6h4v2h-4z" fill="#c8482e"/><path d="M22 8h4v2h-4z" fill="#3a82d0"/><path d="M2 11h30v17H2z" fill="#f8eaa6"/><path d="M6 31v-7q0-3 3-3h17q3 0 3 3v7h-6v-5H12v5z" fill="#8fd0ee" stroke="#5898c0"/></svg></button>
    <button aria-label="Chrome"><svg viewBox="0 0 32 32"><circle cx="16" cy="16" r="14.500" fill="#f7cf2e"/><path d="M16 16L3.500 8.500A14.500 14.500 0 0 1 29 9.500H16z" fill="#df3b2c"/><path d="M16 16L3.500 8.500a14.500 14.500 0 0 0 10.500 22L21 19z" fill="#3ca04a"/><circle cx="16" cy="16" r="6.800" fill="#fff"/><circle cx="16" cy="16" r="5.300" fill="#3f7fd8"/></svg></button>
    <button aria-label="Skype"><svg viewBox="0 0 32 32"><path d="M9 1.500q4 0 6 1.500a13 13 0 0 1 14 16q2 4 0 8-5 6-11 3A13.500 13.500 0 0 1 2.500 13Q0 3 9 1.500z" fill="#0aa5e6"/><text x="16" y="24" class="sk" fill="#fff">S</text></svg></button>
    <button aria-label="Illustrator"><svg viewBox="0 0 32 32"><rect x="1" y="2" width="30" height="28" fill="url(#gAi)" stroke="#8e4a08"/><text x="16" y="21" class="ap" fill="#ffe27a">Ai</text></svg></button>
    <button class="on" aria-label="Blender"><svg viewBox="0 0 34 28"><use href="#blender"/></svg></button>
    <button aria-label="Photoshop"><svg viewBox="0 0 32 32"><rect x="1" y="2" width="30" height="28" fill="url(#gPs)" stroke="#053060"/><text x="16" y="21" class="ap" fill="#6fd0f8">Ps</text></svg></button>
  </div>
  <div class="tray">
    <svg class="dots" viewBox="0 0 9 30"><path d="M1 0v30M4.500 0v30M8 0v30" stroke="#33475f" stroke-width="1.500" stroke-dasharray="1.500 2"/></svg>
    <span class="lang">ES</span>
    <svg viewBox="0 0 16 16"><path d="M8 5l4 6H4z" fill="#fff"/></svg>
    <svg viewBox="0 0 16 16"><rect x="1" y="6" width="11" height="8" rx="1" fill="#333"/><path d="M3 6a5.500 5.500 0 0 1 11 1v6" fill="none" stroke="#333" stroke-width="1.500"/><path d="M3 8h7M3 11h7" stroke="#aaa" stroke-dasharray="1.500 1"/><rect x="12" y="8" width="3" height="6" fill="#222"/></svg>
    <svg viewBox="0 0 16 16"><path d="M1 5.500h3L8 1v14L4 10.500H1z" fill="#fff" stroke="#456"/><path d="M10 5q2 3 0 6M12 3q4 5 0 10" stroke="#fff" fill="none" stroke-width="1.200"/></svg>
    <svg viewBox="0 0 16 16"><path d="M5 0l3 2.500L11 0l4 3-3 2.500 3 2.500-4 3-3-2.500L5 11 1 8l3-2.500L1 3z" fill="#fff" stroke="#456" stroke-width=".6"/><circle cx="10.500" cy="11" r="4.500" fill="#3fa84a"/><path d="M8.500 11l1.500 1.800 2.700-3.500" stroke="#fff" fill="none" stroke-width="1.300"/></svg>
    <time>13:59<br>24/03/2015</time>
    <button class="desk" aria-label="Show desktop"></button>
  </div>
</footer>
<script src="grid.js"></script>
</body>
</html>
```

FILE: styles.css
```css
* { box-sizing: border-box; margin: 0; padding: 0; }
html, body { height: 100%; }
body { display: flex; flex-direction: column; background: #0b1a22; overflow: hidden; font: 11px/14px "DejaVu Sans Condensed", "DejaVu Sans", sans-serif; color: #000; }
button, input, select { font: inherit; color: inherit; border: 0; background: none; outline: 0; }
svg { display: block; flex: none; }
.defs { position: absolute; width: 0; height: 0; }
ul { list-style: none; }

/* window frame */
.window { flex: 1; min-height: 0; display: flex; flex-direction: column; padding: 0 8px 6px; margin-top: 1px; background: linear-gradient(#b9d1ea 0, #9db7d1 3px, #a9c1de 16px, #b5cfe8 29px, #b8cfe9 120px, #bcd0ea); border: solid #2a3038; border-width: 0 0 1px; border-top: 1px solid #e8f0fa; border-radius: 6px 6px 0 0; box-shadow: inset 2px 0 #e6f0fa, inset -2px 0 #7fd0e4, inset 0 -1px #58c4d4; }
.titlebar { flex: none; height: 28px; display: flex; align-items: center; padding: 5px 2px 0; }
.logo { width: 16px; height: 14px; margin: 0 3px 0 1px; }
.titlebar h1 { flex: 1; font: 12px/16px "Open Sans", sans-serif; color: #10151c; }
.winbtns { display: flex; gap: 2px; }
.winbtns button { width: 31px; height: 17px; display: grid; place-items: center; border: 1px solid #5c7390; border-radius: 2px; background: linear-gradient(#c9dbf0, #b5cbe4 50%, #9fb9d6 50%, #b4cce6); box-shadow: inset 0 0 0 1px #dfeaf6; }
.winbtns svg { width: 12px; height: 12px; }
.winbtns .close { background: linear-gradient(#e3a394, #d06a58 50%, #b93a26 50%, #d4765c); border-color: #6a2a2a; box-shadow: inset 0 0 0 1px #e8b8ac; }

.app { flex: 1; min-height: 0; display: flex; flex-direction: column; background: #000; }
.body { flex: 1; min-height: 0; display: grid; grid-template-columns: minmax(0, 1104fr) minmax(0, 479fr); gap: 1px; margin-top: 1px; }
.left, .right { min-width: 0; min-height: 0; display: flex; flex-direction: column; gap: 1px; }
.bar { position: relative; flex: none; height: 26px; display: flex; align-items: center; padding-left: 9px; background: #686868; white-space: nowrap; }
.topbar { padding: 2px 0 0 8px; background: linear-gradient(#707070, #666); }
.vbar, .tbar { border-top: 1px solid #868686; }
.tbar { height: 27px; padding-top: 1px; }
.hatch { position: absolute; width: 12px; height: 12px; z-index: 2; }
.hatch.tr { top: 0; right: 0; }
.hatch.bl { bottom: 0; left: 0; }
.menus { display: flex; margin-left: 3px; }
.menus button { padding: 2px 10px 0; height: 20px; }
.topbar .menus button, .tbar .menus button { padding-right: 11px; }
.stats { padding-top: 2px; }

/* widgets */
.w { display: flex; align-items: center; height: 20px; border: 1px solid #2b2b2b; border-radius: 4px; padding: 3px 7px 0; min-width: 0; overflow: hidden; white-space: nowrap; }
select.w, input.w { padding-top: 2px; }
.light { background: linear-gradient(#a8a8a8, #8c8c8c); }
.dark { background: linear-gradient(#505050, #393939); color: #fff; }
.blue { background: linear-gradient(#4a72b6, #6390d8); }
.dim { background: linear-gradient(#585858, #6a6a6a); }
.text { background: linear-gradient(#979797, #b0b0b0); }
.i { width: 16px; height: 16px; }
.s { width: 14px; height: 14px; }
.ud { width: 6px; height: 14px; }
.flip { transform: scaleX(-1); }
.sq { flex: none; width: 20px; padding: 0; justify-content: center; }
.etype { width: 30px; padding: 0 3px; justify-content: space-between; }
.pick { width: 35px; padding: 0 3px 0 4px; justify-content: space-between; }
.menu { display: grid; align-items: center; }
.menu > * { grid-area: 1 / 1; }
.menu select { width: 100%; appearance: none; }
.menu .ud { justify-self: end; margin-right: 4px; z-index: 1; pointer-events: none; }
.menu .i { margin-left: 4px; z-index: 1; pointer-events: none; }
.group, .row { display: flex; }
.group > *:not(:last-child), .row > *:not(:last-child) { margin-right: -1px; }
.group > :not(:first-child), .group > :not(:first-child) .w, .row > :not(:first-child) { border-top-left-radius: 0; border-bottom-left-radius: 0; }
.group > :not(:last-child), .group > :not(:last-child) .w, .row > :not(:last-child) { border-top-right-radius: 0; border-bottom-right-radius: 0; }
.group .sq:not(:last-child) { width: 21px; }
.row > * { flex: 1; }
.mid > * { justify-content: center; }
.col { display: flex; flex-direction: column; }
.col > :not(:first-child) { border-top-left-radius: 0; border-top-right-radius: 0; }
.col > :not(:last-child) { border-bottom-left-radius: 0; border-bottom-right-radius: 0; border-bottom: 0; }
.iconfield { display: grid; align-items: center; }
.iconfield > * { grid-area: 1 / 1; min-width: 0; }
.iconfield .i { z-index: 1; margin-left: 3px; }
.nums2 { display: flex; height: 20px; border: 1px solid #2b2b2b; border-radius: 10px; overflow: hidden; background: linear-gradient(#989898, #b4b4b4); }
.num { flex: 1; min-width: 0; display: flex; align-items: center; padding: 0 5px; }
.num + .num { border-left: 1px solid #2b2b2b; }
.num label { margin-left: 6px; padding-top: 2px; }
.num input { flex: 1; min-width: 0; width: 0; padding: 2px 7px 0 0; text-align: right; }
.num i { width: 0; height: 0; border: solid transparent; border-width: 3px 0; }
.num .l { border-right: 4px solid #777; }
.num .r { border-left: 4px solid #777; }
.stack { flex-direction: column; height: 39px; background: linear-gradient(#989898, #b4b4b4 50%, #989898 50%, #b4b4b4); }
.stack .num + .num { border-left: 0; border-top: 1px solid #2b2b2b; }

/* top bar */
.idsel + .idsel { margin-left: 5px; }
.idsel .pick { width: 33px; }
.idsel .text { width: 121px; }
.engine { width: 111px; margin-left: 17px; }
.logo2 { width: 18px; height: 15px; margin: 0 9px 0 18px; }

/* 3d view */
.view3d { flex: 1; min-height: 0; display: flex; flex-direction: column; background: #393939; }
.main3d { flex: 1; min-height: 0; display: flex; }
.vbar { gap: 5px; background: #727272; }
.vbar .menus { margin: 0 0 0 -1px; }
.mode { width: 113px; }
.mode select { padding-left: 22px; }
.orient { width: 73px; }
.layergrid { display: grid; grid-template-columns: repeat(5, 1fr); grid-auto-rows: 9px; gap: 1px; width: 49px; border: 1px solid #2b2b2b; border-radius: 4px; overflow: hidden; background: #2b2b2b; }
.layergrid b { background: #999; display: grid; place-items: center; }
.layergrid .act::after { content: ""; width: 5px; height: 5px; border: 1px solid #4a2a08; border-radius: 50%; background: #f0983c; }
.shelf { flex: none; width: 159px; display: flex; flex-direction: column; background: #727272; }
.tools { height: 477px; display: flex; background: #434343; }
.tabs { width: 19px; padding: 6px 0 0 2px; display: flex; flex-direction: column; gap: 5px; }
.tab { writing-mode: vertical-rl; transform: rotate(180deg); display: grid; place-items: center; width: 17px; background: #555; border-radius: 0 4px 4px 0; color: #0c0c0c; line-height: 16px; }
.tab.on { background: #727272; }
.t1 { height: 36px; }
.t2 { height: 45px; }
.t3 { height: 56px; }
.t4 { height: 62px; }
.t5 { height: 48px; }
.t6 { height: 79px; }
.toolpanels { flex: 1; min-width: 0; background: #727272; padding: 0 5px 0 6px; }
.panel { border-top: 1px solid #3a3a3a; box-shadow: inset 0 1px #8a8a8a; padding: 1px 3px 7px; }
.panel.first { border-top: 0; box-shadow: none; }
.panel h2 { display: flex; align-items: center; height: 22px; margin-bottom: 9px; padding: 0 2px 0 5px; font-weight: normal; font-size: 12px; line-height: 16px; color: #0c0c0c; }
.grip { width: 11px; height: 5px; margin: 2px 0 0 auto; }
.tri { width: 9px; height: 9px; margin-right: 4px; background: #262626; clip-path: polygon(0 0, 100% 0, 50% 100%); }
.tri.shut { clip-path: polygon(0 0, 100% 50%, 0 100%); }
.toolpanels .panel { padding-bottom: 6px; }
.toolpanels h2 { padding-top: 1px; margin-bottom: 10px; }
.toolpanels .col, .toolpanels .menu { margin-bottom: 5px; }
.toolpanels .first .col:last-child { margin-bottom: 0; }
.toolpanels .menu { margin-bottom: 0; }
.toolpanels .lab { height: 25px; padding: 9px 0 0 8px; }
.toolpanels .row > * { flex: 1 1 0; }
.redo { flex: 1; border-top-color: #8a8a8a; box-shadow: none; padding: 1px 9px 7px 7px; }
.redo label { display: block; height: 20px; padding: 4px 0 0 7px; }
.canvas { position: relative; flex: 1; min-width: 0; background: #393939; }
.scene3d { position: absolute; width: 100%; height: 100%; }
.ax { font-size: 11px; }
.persp, .obname { position: absolute; color: #fff; }
.persp { left: 20px; top: 11px; }
.obname { left: 70px; bottom: 7px; }
.expand { position: absolute; right: 0; top: 22px; width: 16px; height: 14px; border-radius: 4px 0 0 4px; background: #303030; color: #999; font-weight: bold; }

/* timeline */
.timeline { position: relative; flex: none; display: flex; flex-direction: column; background: #686868; }
.track { position: relative; height: 32px; background: linear-gradient(90deg, #434343 17%, #727272 17%, #727272 90.2%, #434343 90.2%); overflow: hidden; }
.lines { display: flex; height: 100%; margin-left: 58px; }
.lines i { flex: 0 0 65px; border-left: 1px solid rgba(0, 0, 0, .25); }
.playhead { position: absolute; left: 17%; top: 0; width: 4px; height: 100%; background: #5fbf4a; border-left: 1px solid #2a5a20; }
.scale { display: grid; height: 16px; align-items: center; overflow: hidden; background: #727272; }
.scale > * { grid-area: 1 / 1; min-width: 0; }
.scalebar { height: 13px; margin: 0 4px; border: 1px solid #444; border-radius: 7px; background: radial-gradient(circle at 5px 5px, #666 4px, transparent 5px), linear-gradient(#8a8a8a, #7a7a7a); }
.nums { display: flex; padding-left: 29px; font-family: "DejaVu Sans", sans-serif; }
.nums span { flex: 0 0 64px; text-align: center; }
.nums .neg { padding-right: 5px; }
.tbar .menus { margin: 0 1px 0 4px; }
.range { width: 228px; margin-left: 5px; }
.cur { width: 90px; margin-left: 6px; }
.player { margin-left: 15px; }
.sync { width: 115px; margin-left: 5px; }
.rec { margin-left: 16px; }
.keying { margin-left: 5px; }
.keying .iconfield { width: 131px; }

/* outliner */
.outliner { position: relative; flex: none; height: 134px; display: flex; flex-direction: column; background: #727272; overflow: hidden; }
.outliner > .bar { height: 27px; border-bottom: 1px solid #7c7c7c; }
.disp { width: 119px; margin-left: 4px; }
.find { width: 111px; margin-left: 5px; }
.treewrap { flex: 1; min-height: 0; display: flex; overflow: hidden; }
.tree { position: relative; flex: 1; min-width: 0; }
.tree::before { content: ""; position: absolute; left: 27px; top: 18px; bottom: 0; border-left: 1px solid #3c3c3c; }
.tree li { display: flex; align-items: center; height: 20px; background-color: #727272; }
.tree li:nth-child(odd) { background-color: #6b6b6b; }
.tree li.kid { background-image: linear-gradient(#3c3c3c, #3c3c3c); background-repeat: no-repeat; background-position: 28px 10px; background-size: 14px 1px; }
.tree li.sel { background: linear-gradient(#3c3c3c, #3c3c3c) no-repeat 10px 10px / 14px 1px, linear-gradient(#7c8186, #7c8186) no-repeat 0 0 / calc(100% - 60px) 100%, #727272; }
.tree .nm { flex: 1; display: flex; align-items: center; padding: 2px 0 0 2px; }
.nm.below { padding-left: 33px; }
.nm i { width: 1px; height: 12px; margin: 0 8px 0 11px; background: #444; }
.ex { position: relative; z-index: 1; width: 10px; height: 10px; margin: 0 8px 0 23px; }
.ex.deep { margin: 0 3px 0 28px; }
.ex.root { margin: 0 8px 0 3px; }
.ti { width: 18px; height: 17px; position: relative; }
.halo { border-radius: 50%; background: rgba(190, 200, 210, .35); }
.c { width: 20px; height: 20px; display: grid; place-items: center; border-left: 1px solid #606060; }
.c svg { width: 14px; height: 14px; }
.sb { flex: none; display: flex; flex-direction: column; width: 17px; padding: 4px 4px 4px 0; }
.sb .thumb { width: 13px; border: 1px solid #444; border-radius: 7px; background: linear-gradient(90deg, #8e8e8e, #787878); }
.outliner .sb { background: linear-gradient(#525252, #525252) no-repeat 0 20px / 13px 82px; }
.thumb.a { height: 88px; }

/* properties */
.properties { position: relative; flex: 1; min-height: 0; display: flex; flex-direction: column; background: #727272; overflow: hidden; }
.pbar { border-bottom: 1px solid #868686; height: 27px; background: #6c6c6c; }
.ctx { margin-left: 7px; }
.ctx .w:not(.blue) svg { opacity: .7; }
.propwrap { flex: 1; min-height: 0; display: flex; overflow: hidden; }
.propwrap .sb { background: linear-gradient(#525252, #525252) no-repeat 0 20px / 13px calc(100% - 26px); }
.thumb.b { height: 402px; }
.panels { flex: 1; min-width: 0; padding: 0 5px; }
.crumb { display: flex; align-items: center; height: 34px; padding: 2px 0 0 5px; }
.crumb svg + svg { margin: 0 4px 0 7px; }
.crumb span { padding-top: 2px; }
.properties .panel h2 { padding-right: 3px; }
.half { width: calc(50% - 4px); justify-content: center; }
.properties .lab { height: 30px; padding: 10px 0 0 7px; }
.properties .lab.q { height: 26px; padding-top: 9px; }
.checks { display: grid; grid-template-columns: 227px 1fr; grid-auto-rows: 22px; margin-top: 4px; color: #fff; }
.checks.plain { color: #000; }
.checks label { display: flex; align-items: center; padding: 3px 0 0 3px; }
.checks .off { color: #444; }
.off input { opacity: .4; }
.checks input { appearance: none; width: 14px; height: 14px; margin: -4px 8px 0 0; display: grid; place-items: center; border: 1px solid #2e2e2e; border-radius: 4px; background: linear-gradient(#5a5a5a, #434343); }
.checks input:checked::after { content: ""; width: 5px; height: 9px; margin: -5px 0 0 3px; border: solid #d8d8d8; border-width: 0 2px 2px 0; transform: rotate(40deg); }
.checks.sys { margin-top: -1px; }
.aa { display: flex; align-items: center; margin-bottom: 5px; }
.aa label { flex: 1; padding: 2px 0 0 7px; }
.aa .menu { width: 66%; }

/* taskbar */
.taskbar { flex: none; height: 41px; display: flex; align-items: stretch; border-top: 1px solid #dfe9f5; background: linear-gradient(90deg, #8ea5c0, #7f95b0 70px, #a7c0dc 76px, #a7c0dc 82%, #7f94ae 85%); }
.orb { width: 54px; padding-left: 1px; display: grid; place-items: center; }
.orb svg { width: 38px; height: 38px; }
.dots { width: 9px; height: 30px; margin: 5px 12px 0 4px; }
.tasks { display: flex; gap: 3px; margin-left: -4px; }
.tasks button { width: 59px; display: grid; place-items: center; border: 1px solid #4d6480; border-radius: 3px; background: linear-gradient(135deg, #d5e0ee, #afc3da 60%, #bccde2); box-shadow: inset 0 0 0 1px #eaf1f8; }
.tasks .on { background: linear-gradient(135deg, #f0f4fa, #d9e5f2); }
.tasks svg { width: 32px; height: 30px; }
.sk { font: bold 23px "Open Sans", sans-serif; text-anchor: middle; }
.ap { font: bold 14px "Open Sans", sans-serif; text-anchor: middle; }
.tray { display: flex; align-items: center; margin-left: auto; color: #fff; font: 12px/17px "Open Sans", sans-serif; }
.tray > svg:not(.dots) { width: 18px; height: 18px; margin: 4px 3px 0; }
.tray .dots { align-self: flex-start; margin: 4px 9px 0 0; }
.lang { margin: -6px 9px 0 0; }
.tray time { text-align: center; margin: 0 8px 0 11px; }
.desk { width: 24px; align-self: stretch; border: 1px solid #39495c; background: linear-gradient(135deg, #8296ae, #5f748c 50%, #8da3bb); box-shadow: inset 1px 1px #b8c8da; }
```

FILE: grid.js
```js
// Projects the 16 x 16 floor grid into view coordinates.
function project(u, v) {
  const w = 1 + 0.144 * u - 0.306 * v;
  return [(639.3 + 340.65 * u - 75.98 * v) / w, (403.2 - 35.9 * u + 68.2 * v) / w];
}
const grid = document.getElementById('grid');
function line(a, b) {
  const el = document.createElementNS('http://www.w3.org/2000/svg', 'path');
  el.setAttribute('d', 'M' + a.join(' ') + 'L' + b.join(' '));
  el.setAttribute('stroke', '#4d4d4d');
  grid.appendChild(el);
}
for (let i = -8; i <= 8; i++) {
  line(project(i / 8, -1), project(i / 8, 1));
  line(project(-1, i / 8), project(1, i / 8));
}
```
